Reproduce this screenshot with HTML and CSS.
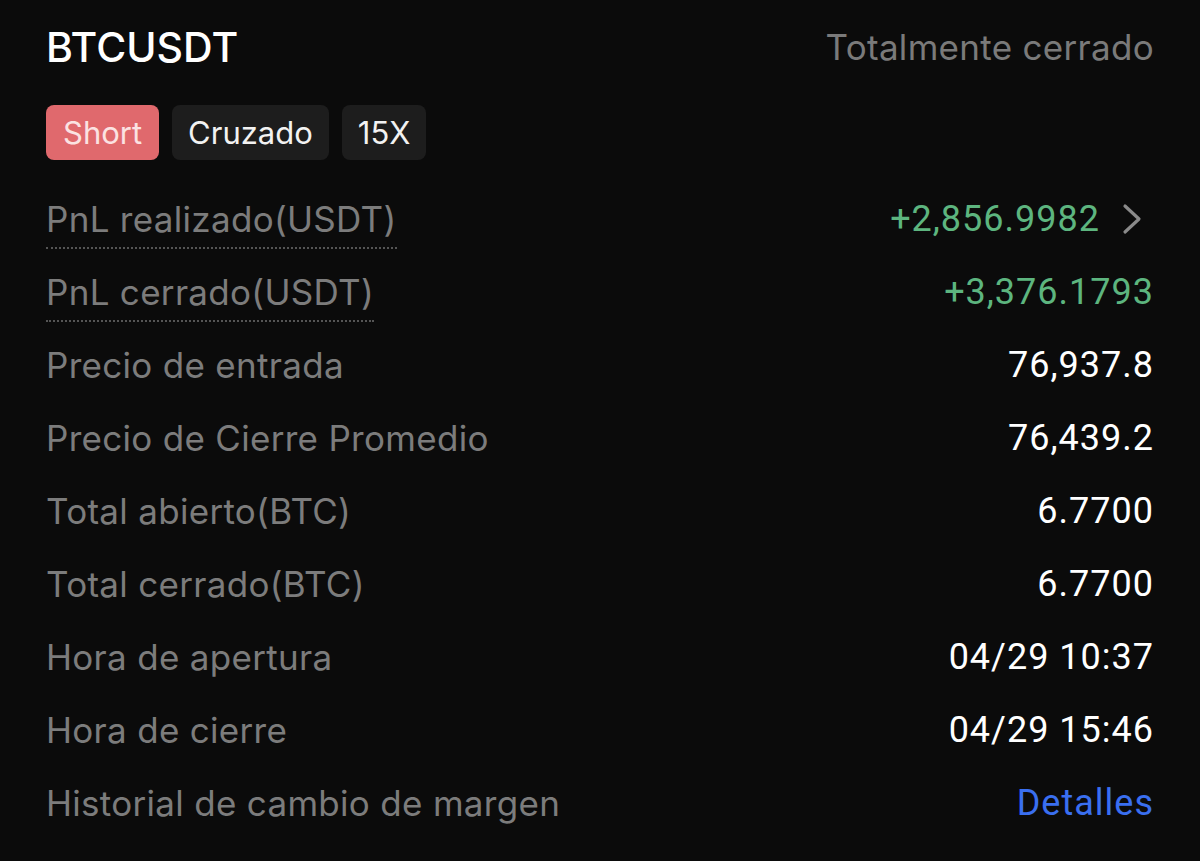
FILE: index.html
```html
<!DOCTYPE html>
<html lang="es">
<head>
    <meta charset="UTF-8">
    <meta name="viewport" content="width=device-width, initial-scale=1.0">
    <title>BTCUSDT - Historial de posición</title>
    <link rel="stylesheet" href="styles.css">
</head>
<body>
    <div class="card">
        <div class="header">
            <h1 class="symbol">BTCUSDT</h1>
            <span class="status">Totalmente cerrado</span>
        </div>
        <div class="tags">
            <span class="tag tag-short">Short</span>
            <span class="tag">Cruzado</span>
            <span class="tag">15X</span>
        </div>
        <div class="rows">
            <div class="row">
                <span class="label dotted">PnL realizado(USDT)</span>
                <span class="value green">+2,856.9982
                    <svg class="chevron" width="20" height="32" viewBox="0 0 20 32"><path d="M3 3 L17 16 L3 29" fill="none" stroke="#8a8a8a" stroke-width="3.2" stroke-linecap="round" stroke-linejoin="round"/></svg>
                </span>
            </div>
            <div class="row">
                <span class="label dotted">PnL cerrado(USDT)</span>
                <span class="value green">+3,376.1793</span>
            </div>
            <div class="row">
                <span class="label">Precio de entrada</span>
                <span class="value">76,937.8</span>
            </div>
            <div class="row">
                <span class="label">Precio de Cierre Promedio</span>
                <span class="value">76,439.2</span>
            </div>
            <div class="row">
                <span class="label">Total abierto(BTC)</span>
                <span class="value">6.7700</span>
            </div>
            <div class="row">
                <span class="label">Total cerrado(BTC)</span>
                <span class="value">6.7700</span>
            </div>
            <div class="row">
                <span class="label">Hora de apertura</span>
                <span class="value">04/29 10:37</span>
            </div>
            <div class="row">
                <span class="label">Hora de cierre</span>
                <span class="value">04/29 15:46</span>
            </div>
            <div class="row">
                <span class="label">Historial de cambio de margen</span>
                <a class="value link" href="#">Detalles</a>
            </div>
        </div>
    </div>
</body>
</html>
```

FILE: styles.css
```css
body {
    margin: 0;
    padding: 0;
    background-color: #0b0b0b;
    font-family: Inter, "Noto Sans", sans-serif;
    color: #fff;
}

.card {
    padding: 22px 46px 0 46px;
}

.header {
    display: flex;
    justify-content: space-between;
    align-items: center;
    height: 50px;
}

.symbol {
    margin: 0;
    font-size: 41px;
    font-weight: 500;
    color: #fff;
}

.status {
    font-size: 35px;
    letter-spacing: 0.3px;
    color: #7a7a7a;
}

.tags {
    display: flex;
    gap: 13px;
    margin-top: 33px;
}

.tag {
    display: flex;
    align-items: center;
    height: 55px;
    padding: 0 16px;
    border-radius: 8px;
    background-color: #1d1d1d;
    font-size: 31px;
    color: #f2f2f2;
}

.tag-short {
    padding: 0 17px;
    background-color: #e0696d;
    color: #fbe2e2;
}

.rows {
    display: flex;
    flex-direction: column;
    margin-top: 22px;
}

.row {
    display: flex;
    justify-content: space-between;
    align-items: center;
    height: 73px;
}

.label {
    font-size: 35px;
    letter-spacing: 0.3px;
    color: #7c7c7c;
}

.label.dotted {
    padding-bottom: 7px;
    border-bottom: 2px dotted #555;
    margin-top: 9px;
}

.value {
    display: flex;
    align-items: center;
    font-family: Roboto, "Noto Sans", sans-serif;
    font-size: 36px;
    letter-spacing: 1px;
    color: #fff;
}

.green {
    color: #5db57f;
}

.chevron {
    margin-left: 22px;
    margin-right: 12px;
}

.link {
    color: #3a6ff0;
    text-decoration: none;
}
```
